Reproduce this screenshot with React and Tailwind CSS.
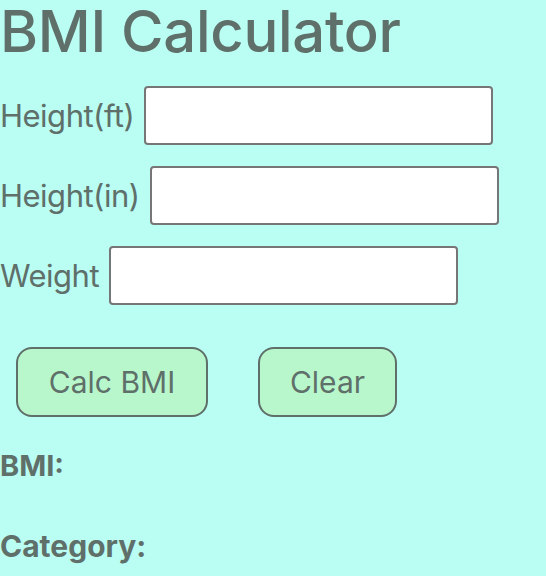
export default function App() {
  const rows = [
    { label: "Height(ft)" },
    { label: "Height(in)" },
    { label: "Weight" },
  ];

  return (
    <div className="min-h-[576px] w-full bg-[#b9fdf3] text-[#5f6f69] font-['Inter',sans-serif]">
      <h1 className="text-[58px] leading-[62px] font-medium tracking-[-0.3px]">BMI Calculator</h1>

      <div className="mt-[24px] flex flex-col gap-[21px]">
        {rows.map((r) => (
          <div key={r.label} className="flex items-center gap-[10px]">
            <label className="text-[31px] leading-[36px] tracking-[-0.5px]">{r.label}</label>
            <input
              type="text"
              className="w-[349px] h-[59px] bg-white border-2 border-[#767676] rounded-[4px]"
            />
          </div>
        ))}
      </div>

      <div className="mt-[42px] ml-[16px] flex gap-[50px]">
        <button className="h-[70px] w-[192px] rounded-[16px] border-2 border-[#5f6f69] bg-[#b8f7cc] text-[30px]">
          Calc BMI
        </button>
        <button className="h-[70px] w-[139px] rounded-[16px] border-2 border-[#5f6f69] bg-[#b8f7cc] text-[30px]">
          Clear
        </button>
      </div>

      <p className="mt-[32px] text-[29px] font-bold leading-[33px]">BMI:</p>
      <p className="mt-[47px] text-[30px] font-bold leading-[34px]">Category:</p>
    </div>
  );
}
